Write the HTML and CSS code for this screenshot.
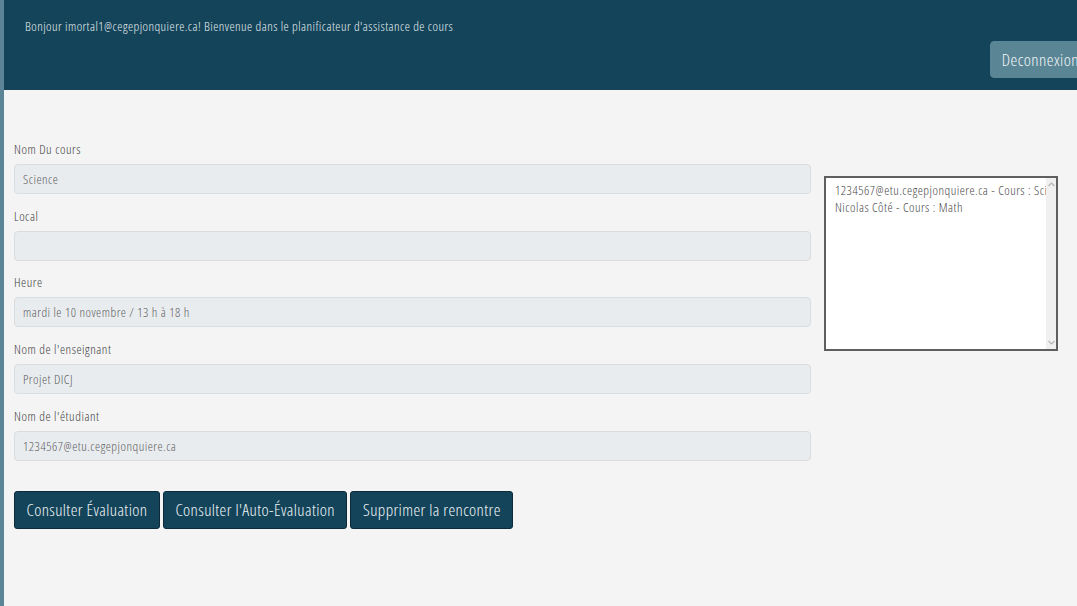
FILE: index.html
```html
<!DOCTYPE html>
<html lang="fr">
<head>
<meta charset="utf-8">
<title>Planificateur</title>
<link rel="stylesheet" href="styles.css">
</head>
<body>
<div class="page">
  <header class="topbar">
    <p class="greeting">Bonjour imortal1@cegepjonquiere.ca! Bienvenue dans le planificateur d'assistance de cours</p>
    <div class="topbar-actions">
      <button class="btn-logout">Deconnexion</button>
    </div>
  </header>
  <main class="content">
    <section class="form-col">
      <div class="field">
        <label class="field-label">Nom Du cours</label>
        <div class="field-input">Science</div>
      </div>
      <div class="field">
        <label class="field-label">Local</label>
        <div class="field-input"></div>
      </div>
      <div class="field">
        <label class="field-label">Heure</label>
        <div class="field-input">mardi le 10 novembre / 13 h à 18 h</div>
      </div>
      <div class="field">
        <label class="field-label">Nom de l'enseignant</label>
        <div class="field-input">Projet DICJ</div>
      </div>
      <div class="field">
        <label class="field-label">Nom de l'étudiant</label>
        <div class="field-input">1234567@etu.cegepjonquiere.ca</div>
      </div>
      <div class="actions">
        <button class="btn-dark">Consulter Évaluation</button>
        <button class="btn-dark">Consulter l'Auto-Évaluation</button>
        <button class="btn-dark">Supprimer la rencontre</button>
      </div>
    </section>
    <aside class="listbox">
      <ul class="list-items">
        <li>1234567@etu.cegepjonquiere.ca - Cours : Science</li>
        <li>Nicolas Côté - Cours : Math</li>
      </ul>
      <div class="scrollbar">
        <svg class="arrow" width="7" height="5" viewBox="0 0 7 5"><path d="M0.5 4 L3.5 1 L6.5 4" fill="none" stroke="#b5b5b5" stroke-width="1.2"/></svg>
        <svg class="arrow" width="7" height="5" viewBox="0 0 7 5"><path d="M0.5 1 L3.5 4 L6.5 1" fill="none" stroke="#b5b5b5" stroke-width="1.2"/></svg>
      </div>
    </aside>
  </main>
</div>
</body>
</html>
```

FILE: styles.css
```css
html, body {
  margin: 0;
  padding: 0;
  height: 100%;
  background: #f4f4f4;
  font-family: "Open Sans", "Noto Sans", sans-serif;
  font-stretch: 75%;
  font-weight: 300;
}

.page {
  min-height: 100%;
  border-left: 4px solid #5b8597;
  box-sizing: border-box;
  overflow: hidden;
}

.topbar {
  height: 90px;
  background: #13445a;
  display: flex;
  flex-direction: column;
  box-sizing: border-box;
  padding: 18px 0 0 21px;
}

.greeting {
  margin: 0;
  font-size: 13px;
  line-height: 17px;
  letter-spacing: 0.46px;
  color: #e6edf0;
}

.topbar-actions {
  display: flex;
  justify-content: flex-end;
  margin-top: 6px;
  margin-right: -14px;
}

.btn-logout {
  font-family: inherit;
  font-stretch: inherit;
  font-weight: 300;
  font-size: 17px;
  letter-spacing: 0.45px;
  color: #f2f6f8;
  background: #5a8594;
  border: 1px solid #5a8594;
  border-radius: 4px;
  height: 37px;
  padding: 0 11px;
}

.content {
  display: flex;
  align-items: flex-start;
  padding: 51px 0 0 10px;
}

.form-col {
  width: 797px;
}

.field {
  margin-bottom: 13.7px;
}

.field-label {
  display: block;
  font-size: 13px;
  line-height: 17px;
  letter-spacing: 0.55px;
  color: #3e3e3e;
  margin-bottom: 6px;
}

.field-input {
  height: 30px;
  box-sizing: border-box;
  background: #e9ecef;
  border: 1px solid #dadde0;
  border-radius: 4px;
  padding: 0 8px;
  font-size: 13px;
  line-height: 28px;
  letter-spacing: 0.5px;
  color: #606060;
}

.actions {
  margin-top: 30px;
  display: flex;
  gap: 3px;
}

.btn-dark {
  font-family: inherit;
  font-stretch: inherit;
  font-weight: 300;
  font-size: 17px;
  letter-spacing: 0.4px;
  color: #f0f4f6;
  background: #13445a;
  border: 1px solid #0b2b3a;
  border-radius: 3px;
  height: 38px;
  padding: 0 11.5px;
}

.listbox {
  margin: 35px 0 0 13px;
  width: 234px;
  height: 175px;
  box-sizing: border-box;
  background: #fff;
  border: 2px solid #5f5f5f;
  display: flex;
  overflow: hidden;
}

.list-items {
  list-style: none;
  margin: 0;
  padding: 4px 0 0 9px;
  flex: 1;
  overflow: hidden;
  font-size: 13px;
  line-height: 17px;
  letter-spacing: 0.5px;
  color: #4a4a4a;
}

.list-items li {
  white-space: nowrap;
}

.scrollbar {
  width: 10px;
  background: #f0f0f0;
  display: flex;
  flex-direction: column;
  justify-content: space-between;
  align-items: center;
  padding: 4px 0 4px;
}

.arrow {
  display: block;
}
```
